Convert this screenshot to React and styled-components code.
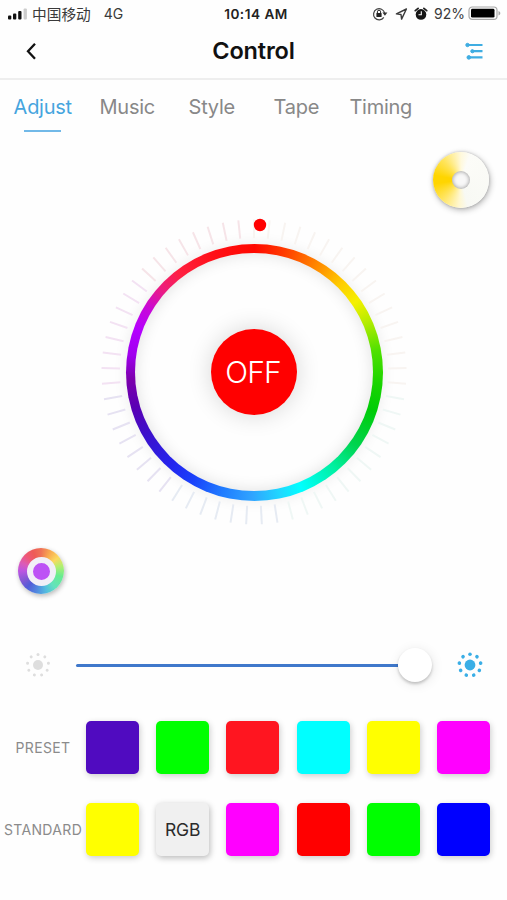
import React from 'react'
import styled, { createGlobalStyle } from "styled-components"

const GlobalStyle = createGlobalStyle`
* {
  box-sizing: border-box;
}
body {
  margin: 0;
  background: #fefefe;
  font-family: Inter, "Noto Sans CJK SC", sans-serif;
}
`

const Screen = styled.div`
display: flex;
flex-direction: column;
width: 507px;
height: 900px;
overflow: hidden;
background: #fefefe;
`

const StatusBar = styled.div`
display: grid;
grid-template-columns: 1fr auto 1fr;
align-items: center;
height: 27px;
padding: 0 6px 0 8px;
font-size: 14px;
color: #3a3a3a;
white-space: nowrap;
`

const Carrier = styled.div`
display: flex;
align-items: center;
`

const CarrierName = styled.span`
font-family: "Noto Sans CJK SC", sans-serif;
font-size: 14.7px;
line-height: 20px;
margin: 0 13px 0 4px;
`

const Network = styled.span`
font-size: 14px;
`

const Clock = styled.span`
padding-left: 3px;
font-weight: 600;
font-size: 13.6px;
letter-spacing: 0.5px;
color: #222222;
`

const Indicators = styled.div`
display: flex;
align-items: center;
justify-content: flex-end;
`

const Percent = styled.span`
font-size: 14px;
margin: 0 3px 0 6px;
`

const NavBar = styled.header`
display: grid;
grid-template-columns: 62px 1fr 66px;
align-items: center;
height: 53px;
padding-bottom: 4px;
border-bottom: 2px solid #eeeeee;
`

const Title = styled.h1`
margin: 0;
padding: 1px 0 0 4px;
text-align: center;
font-size: 23.5px;
line-height: 28px;
font-weight: 600;
letter-spacing: -0.15px;
color: #111111;
`

const NavButton = styled.button`
display: flex;
justify-content: center;
padding: 0;
border: 0;
background: none;
`

const Tabs = styled.nav`
display: grid;
grid-template-columns: repeat(6, 1fr);
height: 52px;
`

const Tab = styled.a`
display: flex;
flex-direction: column;
align-items: center;
padding: 14px 0 0 1px;
font-size: 20px;
line-height: 27px;
letter-spacing: -0.25px;
color: ${props => props.$active ? "#45a5de" : "#888888"};
&::after {
  content: "";
  width: 37px;
  height: 2px;
  margin-top: 9px;
  background: ${props => props.$active ? "#72b9e8" : "transparent"};
}
`

const WhiteRow = styled.div`
display: flex;
justify-content: flex-end;
height: 80px;
padding: 19.5px 18.5px 0 0;
`

const WhiteDisc = styled.div`
display: grid;
place-items: center;
width: 56px;
height: 56px;
border-radius: 50%;
background: conic-gradient(from 0deg, #fff9dc, #fcfcf8 20deg, #f8f9f4 165deg, #fff7cf 185deg, #ffe45c 225deg, #ffd500 262deg, #ffd500 280deg, #ffe45a 318deg, #fff9dc 360deg);
box-shadow: 1px 2px 6px rgba(0, 0, 0, 0.3), 0 0 3px rgba(0, 0, 0, 0.2);
`

const WhiteHole = styled.div`
width: 18px;
height: 18px;
border-radius: 50%;
background: #f8f8f8;
box-shadow: inset 0 0 4px rgba(0, 0, 0, 0.42);
`

const Dial = styled.div`
display: grid;
place-items: center;
height: 320px;
padding-left: 1px;
> * {
  grid-area: 1 / 1;
}
`

const Wheel = styled.div`
display: grid;
place-items: center;
width: 257px;
height: 257px;
border-radius: 50%;
background: conic-gradient(#ff0800 0deg, #ff3c00 14deg, #ff9000 32deg, #ffcc00 44deg, #f5f000 55deg, #b4ec00 66deg, #4fe000 80deg, #1ad400 95deg, #00cc08 108deg, #00d450 126deg, #00f0a0 140deg, #00ffff 158deg, #20d8ff 168deg, #30a4ff 181deg, #207cff 195deg, #1a40fa 210deg, #2424ee 222deg, #3c10cc 240deg, #5a00b4 254deg, #7c00ac 267deg, #a000ee 278deg, #b400ff 290deg, #c808d8 301deg, #ec1c80 312deg, #ff2040 323deg, #ff1018 340deg, #ff0800 360deg);
box-shadow: 0 0 14px rgba(0, 0, 0, 0.08);
`

const WheelFace = styled.div`
display: grid;
place-items: center;
width: 238px;
height: 238px;
border-radius: 50%;
background: #fefefe;
box-shadow: inset 0 0 16px rgba(0, 0, 0, 0.12);
`

const PowerButton = styled.button`
width: 86px;
height: 86px;
padding: 0 2px 1px 0;
border: 0;
border-radius: 50%;
background: #ff0000;
box-shadow: 0 0 24px rgba(0, 0, 0, 0.16);
font-family: Inter, sans-serif;
font-size: 30px;
font-weight: 300;
letter-spacing: -0.9px;
color: #ffffff;
`

const ColorRow = styled.div`
display: flex;
padding: 16px 0 0 18px;
height: 89px;
`

const ColorDisc = styled.div`
display: grid;
place-items: center;
width: 46px;
height: 46px;
border-radius: 50%;
background: conic-gradient(#ee7258 0deg, #f8a850 25deg, #fbd960 52deg, #b5ef70 75deg, #68ec90 105deg, #63e2bd 140deg, #55bddf 165deg, #5189df 192deg, #535bd8 220deg, #8258d4 242deg, #bb55e2 270deg, #dc5bb6 293deg, #ee5878 315deg, #ee5b58 338deg, #ee7258 360deg);
box-shadow: 1px 2px 5px rgba(0, 0, 0, 0.28);
`

const ColorCore = styled.div`
width: 29px;
height: 29px;
border: 6px solid #f2eff7;
border-radius: 50%;
background: #bd52f5;
`

const Brightness = styled.div`
display: grid;
grid-template-columns: 76px 1fr 74px;
align-items: center;
height: 88px;
`

const LampCell = styled.div`
display: flex;
justify-content: center;
`

const Slider = styled.div`
display: flex;
align-items: center;
height: 34px;
padding-right: 1px;
`

const Track = styled.div`
flex: 1;
height: 3px;
border-radius: 2px 0 0 2px;
background: #3f78cb;
`

const Knob = styled.div`
width: 34px;
height: 34px;
border-radius: 50%;
background: #ffffff;
box-shadow: 0 2px 3px rgba(0, 0, 0, 0.2), 1px 2px 12px rgba(0, 0, 0, 0.1);
`

const SwatchPanel = styled.section`
display: flex;
flex-direction: column;
gap: 29px;
padding-top: 12px;
`

const SwatchGroup = styled.div`
display: flex;
align-items: center;
`

const GroupName = styled.div`
width: 86px;
text-align: center;
font-size: 14px;
letter-spacing: 0.35px;
color: #8b8b8b;
`

const Swatches = styled.div`
display: grid;
grid-template-columns: repeat(6, 53px);
column-gap: 17.2px;
`

const Swatch = styled.div`
display: grid;
place-items: center;
height: 53px;
border-radius: 5px;
background: ${props => props.$color};
box-shadow: 1px 2px 6px rgba(0, 0, 0, ${props => props.$raised ? 0.28 : 0.2});
font-size: 17.5px;
letter-spacing: -0.1px;
color: #2b2b2b;
`

const tabs = [
  { name: "Adjust", active: true },
  { name: "Music" },
  { name: "Style" },
  { name: "Tape" },
  { name: "Timing" },
]

const preset = ["#500bc0", "#00ff00", "#ff1520", "#00ffff", "#ffff00", "#ff00ff"]
const standard = ["#ffff00", "RGB", "#ff00ff", "#ff0000", "#00ff00", "#0000ff"]

const TICKS = 61

function tickColor(deg) {
  if (deg < 100) return "#f8f4f1"
  if (deg < 170) return "#eff7f5"
  if (deg < 215) return "#e6ebf3"
  if (deg < 262) return "#e6e2f2"
  if (deg < 310) return "#f3e2f3"
  return "#f6e4e8"
}

function Ticks() {
  return (
    <svg width="320" height="320" viewBox="-160 -160 320 320">
      {Array.from({ length: TICKS }, (_, i) => {
        const deg = i * 360 / TICKS
        return (
          <line key={i} y1="-152.5" y2="-134" stroke={tickColor(deg)} strokeWidth="2" transform={`rotate(${deg})`} />
        )
      })}
      <circle cx="6" cy="-147" r="6.2" fill="#ff0000" />
    </svg>
  )
}

function Lamp({ color, size, spread, dot }) {
  return (
    <svg width="28" height="28" viewBox="-14 -14 28 28" fill={color}>
      <circle r={size} />
      {Array.from({ length: 9 }, (_, i) => (
        <circle key={i} cy={-spread} r={dot} transform={`rotate(${i * 40})`} />
      ))}
    </svg>
  )
}

function Signal() {
  return (
    <svg width="20" height="12" viewBox="0 0 20 12" fill="#111111">
      <rect x="0" y="7.5" width="3.3" height="4" rx="1" />
      <rect x="5" y="5.5" width="3.3" height="6" rx="1" />
      <rect x="10.2" y="3" width="3.3" height="8.5" rx="1" />
      <rect x="15.6" y="0.5" width="3.3" height="11" rx="1" fill="#cccccc" />
    </svg>
  )
}

function StatusIcons() {
  return (
    <svg width="56" height="16" viewBox="0 0 56 16" fill="none">
      <path d="M11.8 11.4A5.6 5.6 0 1 1 12.6 7" stroke="#444444" strokeWidth="1.2" />
      <path d="M10.4 6.6h5l-2.5 3.2z" fill="#333333" />
      <rect x="4.4" y="7" width="5.2" height="4" rx="0.6" fill="#222222" />
      <path d="M5.4 7.2V5.8a1.6 1.6 0 0 1 3.2 0v1.4" stroke="#222222" strokeWidth="1" />
      <path d="M34.4 3 24.4 7.9l4.6.6.6 4.6z" stroke="#3a3a3a" strokeWidth="1.4" strokeLinejoin="round" />
      <circle cx="49" cy="8.4" r="5.3" fill="#151515" />
      <path d="M43.3 4.6 46.1 2.4M54.7 4.6 51.9 2.4" stroke="#222222" strokeWidth="1.8" strokeLinecap="round" />
      <path d="M49.3 5.2v3.5h-2.8" stroke="#ffffff" strokeWidth="1.1" />
    </svg>
  )
}

function Battery() {
  return (
    <svg width="33" height="15" viewBox="0 0 33 15" fill="none">
      <rect x="1" y="1" width="28" height="12.4" rx="3.2" stroke="#a8a8a8" strokeWidth="1.2" />
      <rect x="3" y="2.8" width="23.5" height="8.8" rx="1.4" fill="#000000" />
      <path d="M30.5 5v4.4c1.3-.5 1.8-1.2 1.8-2.2s-.5-1.7-1.8-2.2z" fill="#a8a8a8" />
    </svg>
  )
}

export default function App() {
  return (
    <Screen>
      <GlobalStyle />
      <StatusBar>
        <Carrier>
          <Signal />
          <CarrierName>中国移动</CarrierName>
          <Network>4G</Network>
        </Carrier>
        <Clock>10:14 AM</Clock>
        <Indicators>
          <StatusIcons />
          <Percent>92%</Percent>
          <Battery />
        </Indicators>
      </StatusBar>
      <NavBar>
        <NavButton>
          <svg width="14" height="20" viewBox="0 0 14 20" fill="none">
            <path d="M11 2.8 4 10.3l7 7.5" stroke="#111111" strokeWidth="2.3" />
          </svg>
        </NavButton>
        <Title>Control</Title>
        <NavButton>
          <svg width="20" height="20" viewBox="0 0 20 20" fill="#3fade2" stroke="#3fade2">
            <path d="M3 4h15.5M7 10.2h11.5M4 16.4h14.5" strokeWidth="2.2" />
            <circle cx="3.5" cy="4" r="1.7" />
            <circle cx="8.4" cy="10.2" r="1.6" />
            <circle cx="4.8" cy="16.4" r="1.8" />
          </svg>
        </NavButton>
      </NavBar>
      <Tabs>
        {tabs.map(tab => (
          <Tab key={tab.name} $active={tab.active}>{tab.name}</Tab>
        ))}
      </Tabs>
      <WhiteRow>
        <WhiteDisc><WhiteHole /></WhiteDisc>
      </WhiteRow>
      <Dial>
        <Wheel>
          <WheelFace>
            <PowerButton>OFF</PowerButton>
          </WheelFace>
        </Wheel>
        <Ticks />
      </Dial>
      <ColorRow>
        <ColorDisc><ColorCore /></ColorDisc>
      </ColorRow>
      <Brightness>
        <LampCell><Lamp color="#dedede" size={5} spread={10.6} dot={1.5} /></LampCell>
        <Slider>
          <Track />
          <Knob />
        </Slider>
        <LampCell><Lamp color="#3aaee6" size={5.4} spread={10.8} dot={1.8} /></LampCell>
      </Brightness>
      <SwatchPanel>
        <SwatchGroup>
          <GroupName>PRESET</GroupName>
          <Swatches>
            {preset.map(color => <Swatch key={color} $color={color} />)}
          </Swatches>
        </SwatchGroup>
        <SwatchGroup>
          <GroupName>STANDARD</GroupName>
          <Swatches>
            {standard.map(color => color === "RGB"
              ? <Swatch key={color} $color="#f0f0f0" $raised>RGB</Swatch>
              : <Swatch key={color} $color={color} />)}
          </Swatches>
        </SwatchGroup>
      </SwatchPanel>
    </Screen>
  )
}
